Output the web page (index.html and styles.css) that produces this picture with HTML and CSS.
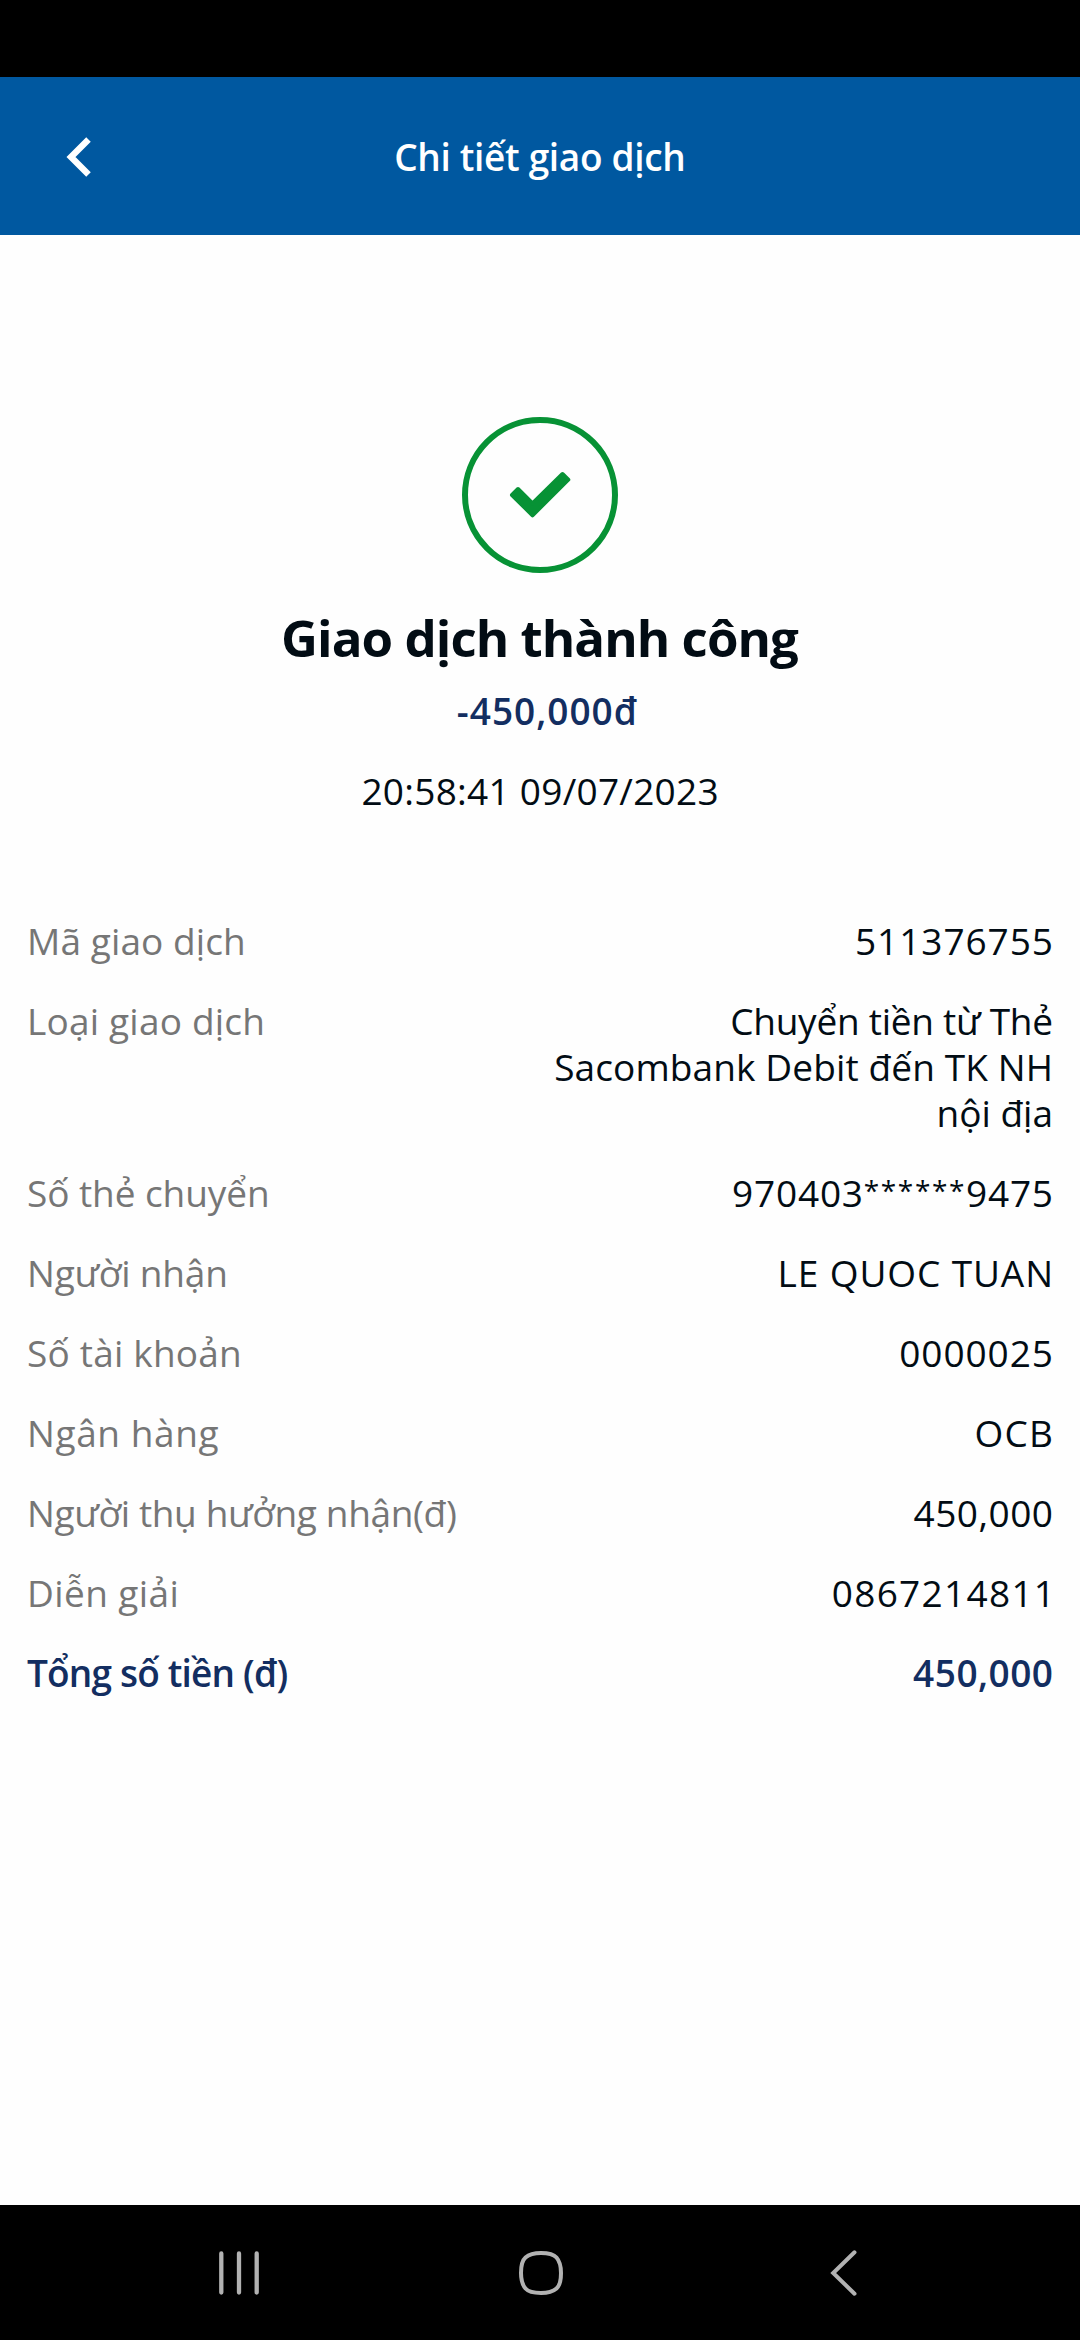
FILE: index.html
```
<!DOCTYPE html>
<html lang="vi">
<head>
<meta charset="utf-8">
<title>Chi tiết giao dịch</title>
<link rel="stylesheet" href="styles.css">
</head>
<body>
<div class="screen">
  <div class="status-bar"></div>
  <header class="app-bar">
    <button class="back" aria-label="Quay lại">
      <svg width="28" height="42" viewBox="0 0 28 42"><path d="M24.5 3.5 7 21l17.500 17.500" fill="none" stroke="#fff" stroke-width="6.400"/></svg>
    </button>
    <h1 class="app-title tk-title">Chi tiết giao dịch</h1>
  </header>
  <main class="content">
    <section class="summary">
      <svg class="success" width="156" height="156" viewBox="0 0 156 156">
        <circle cx="78" cy="78" r="75" fill="none" stroke="#079235" stroke-width="6"/>
        <path d="M50 78 56 72 70.500 86.500 100.500 57 106.300 62.700 70.500 98.300Z" fill="#079235" stroke="#079235" stroke-width="4" stroke-linejoin="round"/>
      </svg>
      <h2 class="result tk-result">Giao dịch thành công</h2>
      <p class="amount tk-amount">-450,000đ</p>
      <p class="time tk-time">20:58:41 09/07/2023</p>
    </section>
    <dl class="details">
      <div class="row"><dt class="tk-l1">Mã giao dịch</dt><dd><span class="tk-v1">511376755</span></dd></div>
      <div class="row"><dt class="tk-l2">Loại giao dịch</dt><dd><span class="tk-v2a">Chuyển tiền từ Thẻ</span><span class="tk-v2b">Sacombank Debit đến TK NH</span><span class="tk-v2c">nội địa</span></dd></div>
      <div class="row"><dt class="tk-l3">Số thẻ chuyển</dt><dd><span class="card-number">970403<span class="mask">******</span>9475</span></dd></div>
      <div class="row"><dt class="tk-l4">Người nhận</dt><dd><span class="tk-v4">LE QUOC TUAN</span></dd></div>
      <div class="row"><dt class="tk-l5">Số tài khoản</dt><dd><span class="tk-v1">0000025</span></dd></div>
      <div class="row"><dt class="tk-l6">Ngân hàng</dt><dd><span class="tk-v6">OCB</span></dd></div>
      <div class="row"><dt class="tk-l7">Người thụ hưởng nhận(đ)</dt><dd><span class="tk-v7">450,000</span></dd></div>
      <div class="row"><dt class="tk-l8">Diễn giải</dt><dd><span class="tk-v8">0867214811</span></dd></div>
      <div class="row total"><dt class="tk-l9">Tổng số tiền (đ)</dt><dd><span class="tk-v7">450,000</span></dd></div>
    </dl>
  </main>
  <nav class="nav-bar">
    <svg width="44" height="48" viewBox="0 0 44 48"><path d="M4.300 4.500v39M22 4.500v39M39.700 4.500v39" fill="none" stroke="#b2b2b2" stroke-width="4.300" stroke-linecap="round"/></svg>
    <svg class="home" width="48" height="48" viewBox="0 0 48 48"><path d="M24 4C31 4 36 4.500 39.500 8.500S44 17 44 24 43.500 36 39.500 39.500 31 44 24 44 12 43.500 8.500 39.500 4 31 4 24 4.500 12 8.500 8.500 17 4 24 4Z" fill="none" stroke="#b2b2b2" stroke-width="4"/></svg>
    <svg width="32" height="50" viewBox="0 0 32 50"><path d="M26.500 4.300 5.200 25l21.300 20.700" fill="none" stroke="#b2b2b2" stroke-width="4" stroke-linecap="round"/></svg>
  </nav>
</div>
</body>
</html>
```
FILE: styles.css
```
* { box-sizing: border-box; margin: 0; padding: 0; }

body {
  background: #fefefe;
  color: #020c14;
  font: 400 37px/46px "Open Sans", "Noto Sans", sans-serif;
}

.screen {
  width: 1080px;
  height: 2340px;
  display: flex;
  flex-direction: column;
}

.status-bar { height: 77px; background: #000; }

.app-bar {
  height: 158px;
  padding: 2px 64px 0;
  background: #0058a0;
  color: #fff;
  display: grid;
  grid-template-columns: 28px 1fr 28px;
  align-items: center;
}

.back { height: 42px; border: 0; background: none; }
.back svg { display: block; }

.app-title {
  font-size: 37px;
  font-weight: 600;
  text-align: center;
}

.content { flex: 1; }

.summary {
  padding-top: 182px;
  display: flex;
  flex-direction: column;
  align-items: center;
}

.success { display: block; }

.result {
  margin-top: 32px;
  font-size: 51px;
  font-weight: 700;
  line-height: 64px;
}

.amount {
  margin-top: 19px;
  padding-left: 14px;
  color: #132e61;
  font-weight: 600;
}

.time { margin-top: 34px; }

.details {
  margin-top: 104px;
  padding: 0 27px 0 27px;
  display: flex;
  flex-direction: column;
  gap: 34px;
}

.row {
  display: flex;
  justify-content: space-between;
}

dt { color: #767676; }

dd {
  display: flex;
  flex-direction: column;
  align-items: flex-end;
  white-space: nowrap;
}

.total, .total dt { color: #132e61; font-weight: 600; }

.nav-bar {
  height: 135px;
  padding: 0 220px 0 217px;
  background: #000;
  display: grid;
  grid-template-columns: 44px 1fr 32px;
  align-items: center;
  justify-items: center;
}

.home { margin-right: 7px; }

/* Tracking; the negative margin drops the space after the last letter. */
[class*="tk-"] {
  letter-spacing: var(--track);
  margin-right: calc(-1 * var(--track));
}

.tk-title { --track: -0.33px; }
.tk-result { --track: -0.95px; }
.tk-amount { --track: 1px; }
.tk-time { --track: 0.27px; }
.tk-l1 { --track: 0.1px; }
.tk-l2 { --track: 0.2px; }
.tk-l3 { --track: -0.07px; }
.tk-l4 { --track: -0.2px; }
.tk-l5 { --track: 0.2px; }
.tk-l6 { --track: 0.6px; }
.tk-l7 { --track: -0.35px; }
.tk-l8 { --track: 0.4px; }
.tk-l9 { --track: -0.82px; }
.tk-v1 { --track: 0.95px; }
.tk-v2a { --track: -0.25px; }
.tk-v2b { --track: 0.12px; }
.tk-v2c { --track: 0; }
.tk-v4 { --track: 0.9px; }
.tk-v6 { --track: 1.2px; }
.tk-v7 { --track: 0.48px; }
.tk-v8 { --track: 1.3px; position: relative; left: 2px; }

.card-number { letter-spacing: 0.8px; margin-right: -0.8px; }

.mask {
  font-size: 28px;
  line-height: 0;
  letter-spacing: 1.6px;
  vertical-align: 6px;
}
```
